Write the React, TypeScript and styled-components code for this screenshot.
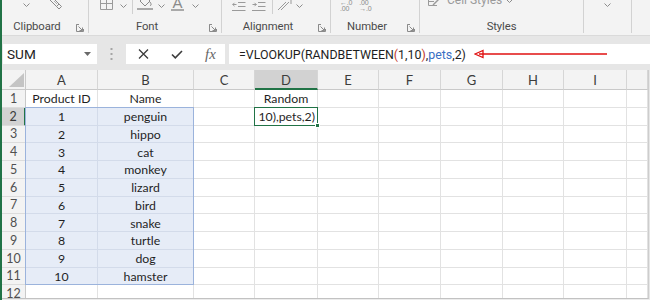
import React from "react";
import styled, { createGlobalStyle, css } from "styled-components";

const Global = createGlobalStyle`
  html, body { margin: 0; padding: 0; background: #ffffff; }
  body { width: 650px; height: 300px; overflow: hidden; font-family: Roboto, "Liberation Sans", Arial, sans-serif; }
`;

const Frame = styled.div`
  display: flex;
  width: 650px;
  height: 300px;
  overflow: hidden;
  background: #e6e6e6;
`;

const GreenEdge = styled.div`
  width: 2px;
  flex: none;
  background: #217346;
`;

const Workbook = styled.div`
  flex: 1;
  min-width: 0;
  display: flex;
  flex-direction: column;
`;

/* ---------- Ribbon ---------- */
const Ribbon = styled.div`
  height: 35px;
  flex: none;
  display: flex;
  background: #f3f3f3;
  border-bottom: 1px solid #dadada;
  overflow: hidden;
`;

const Group = styled.div<{ $w: number }>`
  width: ${(p) => p.$w}px;
  flex: none;
  height: 33px;
  display: flex;
  flex-direction: column;
  border-right: 1px solid #d2d2d2;
  box-sizing: border-box;
`;

const FillGroup = styled.div`
  flex: 1;
`;

const Tools = styled.div<{ $pl: number }>`
  height: 21px;
  flex: none;
  display: flex;
  align-items: flex-start;
  padding-left: ${(p) => p.$pl}px;
  overflow: visible;
`;

const Tool = styled.span<{ $ml?: number; $mt?: number }>`
  display: flex;
  flex: none;
  margin-left: ${(p) => p.$ml ?? 0}px;
  margin-top: ${(p) => p.$mt ?? 0}px;
`;

const ToolDivider = styled.span<{ $ml: number }>`
  width: 1px;
  height: 14px;
  flex: none;
  margin-left: ${(p) => p.$ml}px;
  background: #d0d0d0;
`;

const ColorTool = styled.span<{ $ml: number }>`
  display: flex;
  flex-direction: column;
  align-items: center;
  flex: none;
  margin-left: ${(p) => p.$ml}px;
  margin-top: -4px;
`;

const ColorBar = styled.span<{ $w: number }>`
  width: ${(p) => p.$w}px;
  height: 2px;
  background: #a9a9a9;
`;

const FontA = styled.span`
  font-family: "Liberation Sans", Arial, sans-serif;
  font-size: 15px;
  line-height: 13px;
  color: #8a8a8a;
`;

const TinyText = styled.span`
  display: flex;
  flex-direction: column;
  font-family: "Liberation Sans", Arial, sans-serif;
  font-size: 7px;
  line-height: 6px;
  color: #8a8a8a;
  letter-spacing: -0.2px;
`;

const StylesText = styled.span`
  font-family: Roboto, sans-serif;
  font-size: 12px;
  line-height: 12px;
  color: #9a9a9a;
`;

const GroupFooter = styled.div<{ $launcher?: boolean }>`
  height: 12px;
  display: flex;
  align-items: center;
  padding-right: ${(p) => (p.$launcher ? 4 : 0)}px;
`;

const GroupLabel = styled.span`
  flex: 1;
  text-align: center;
  font-size: 11.3px;
  line-height: 14px;
  color: #4a4a4a;
  letter-spacing: -0.1px;
`;

const LauncherSlot = styled.span`
  width: 12px;
  display: flex;
  justify-content: flex-end;
  margin-top: 1px;
`;

/* ---------- Formula bar ---------- */
const FormulaRow = styled.div`
  height: 34px;
  flex: none;
  display: flex;
  align-items: flex-start;
  padding: 8px 0 0 1px;
  box-sizing: border-box;
  background: #e6e6e6;
`;

const NameBox = styled.div`
  width: 94px;
  height: 20px;
  flex: none;
  display: flex;
  align-items: center;
  justify-content: space-between;
  padding: 0 6px 0 4px;
  box-sizing: border-box;
  background: #ffffff;
  font-size: 13.6px;
  color: #222222;
`;

const DotsSlot = styled.div`
  width: 29px;
  height: 20px;
  flex: none;
  display: flex;
  align-items: center;
  justify-content: center;
`;

const FxBox = styled.div`
  width: 99px;
  height: 20px;
  flex: none;
  display: flex;
  align-items: center;
  padding-left: 12px;
  box-sizing: border-box;
  background: #ffffff;
  gap: 22px;
`;

const FxLabel = styled.span`
  font-family: "Liberation Serif", "Times New Roman", serif;
  font-style: italic;
  font-size: 15px;
  color: #666666;
  line-height: 20px;
`;

const FormulaInput = styled.div`
  position: relative;
  flex: 1;
  height: 20px;
  margin-left: 4px;
  padding-left: 10px;
  display: flex;
  align-items: center;
  background: #ffffff;
  font-size: 12.4px;
  color: #1e1e1e;
  white-space: nowrap;
`;

const Paren = styled.span`
  color: #c0392b;
`;

const Ref = styled.span`
  color: #3a6fc4;
`;

const ArrowMark = styled.svg`
  position: absolute;
  left: 245px;
  top: 5px;
`;

/* ---------- Sheet ---------- */
const Sheet = styled.div`
  display: grid;
  grid-template-columns: 24px 72px 96px 61px 63px 61px 62px 62px 61px 63px 21px;
  grid-template-rows: 20px repeat(12, 17.75px);
  width: 647px;
  height: 229px;
  box-sizing: border-box;
  flex: none;
  overflow: hidden;
  background: #ffffff;
  border-right: 1px solid #cdcdcd;
  border-bottom: 1px solid #c2c2c2;
`;

const place = css<{ $r: number; $c: number }>`
  grid-row: ${(p) => p.$r};
  grid-column: ${(p) => p.$c};
`;

const Corner = styled.div<{ $r: number; $c: number }>`
  ${place};
  display: flex;
  align-items: flex-end;
  justify-content: flex-end;
  padding: 0 1px 2px 0;
  background: #f3f3f3;
  border-right: 1px solid #c9c9c9;
  border-bottom: 1px solid #c9c9c9;
`;

const ColHead = styled.div<{ $r: number; $c: number; $active?: boolean }>`
  ${place};
  display: flex;
  align-items: center;
  justify-content: center;
  font-family: Lato, sans-serif;
  font-size: 13px;
  color: #3c3c3c;
  background: ${(p) => (p.$active ? "#d2d2d2" : "#f3f3f3")};
  border-right: 1px solid #d6d6d6;
  border-bottom: ${(p) => (p.$active ? "2px solid #217346" : "1px solid #c9c9c9")};
  padding-top: ${(p) => (p.$active ? 1 : 0)}px;
`;

const RowHead = styled.div<{ $r: number; $c: number; $active?: boolean }>`
  ${place};
  display: flex;
  align-items: center;
  justify-content: center;
  font-family: Lato, sans-serif;
  font-size: 12.5px;
  color: ${(p) => (p.$active ? "#3a3a3a" : "#505050")};
  background: ${(p) => (p.$active ? "#d2d2d2" : "#f3f3f3")};
  border-right: ${(p) => (p.$active ? "2px solid #217346" : "1px solid #c9c9c9")};
  border-bottom: 1px solid #dcdcdc;
`;

const Cell = styled.div<{ $r: number; $c: number; $sel?: boolean }>`
  ${place};
  display: flex;
  align-items: center;
  justify-content: center;
  font-family: Lato, sans-serif;
  font-size: 12.3px;
  color: #1f1f1f;
  white-space: nowrap;
  overflow: hidden;
  background: ${(p) => (p.$sel ? "#e6ecf7" : "#ffffff")};
  border-right: 1px solid ${(p) => (p.$sel ? "#d3dbea" : "#e2e2e2")};
  border-bottom: 1px solid ${(p) => (p.$sel ? "#d3dbea" : "#e2e2e2")};
  padding-top: 1px;
`;

const SelectionFrame = styled.div`
  grid-row: 3 / 13;
  grid-column: 2 / 4;
  margin: -1px 0 0 -1px;
  border: 1px solid #9bb3dc;
  pointer-events: none;
`;

const ActiveCell = styled.div`
  grid-row: 3;
  grid-column: 5;
  position: relative;
  margin: -1px 0 0 -1px;
  display: flex;
  align-items: center;
  justify-content: flex-end;
  padding: 1px 2px 0 0;
  border: 1px solid #217346;
  background: #ffffff;
  font-family: Lato, sans-serif;
  font-size: 12.3px;
  color: #1f1f1f;
  white-space: nowrap;
  overflow: visible;

  &::after {
    content: "";
    position: absolute;
    right: -3px;
    bottom: -3px;
    width: 3px;
    height: 3px;
    background: #217346;
    border: 1px solid #ffffff;
  }
`;

const BottomStrip = styled.div`
  flex: 1;
  background: #ececec;
`;

/* ---------- Icons ---------- */
const Chevron = () => (
  <svg width="7" height="4" viewBox="0 0 7 4">
    <polyline points="0.5,0.5 3.5,3.5 6.5,0.5" fill="none" stroke="#8c8c8c" strokeWidth="1" />
  </svg>
);

const Launcher = () => (
  <svg width="8" height="8" viewBox="0 0 8 8">
    <path d="M0.5 3 V0.5 H3 M0.5 0.5 V7.5 H7.5 V5" fill="none" stroke="#8a8a8a" strokeWidth="1" />
    <path d="M2.5 2.5 L6.5 6.5 M6.5 3.5 V6.5 H3.5" fill="none" stroke="#8a8a8a" strokeWidth="1" />
  </svg>
);

const Brush = () => (
  <svg width="13" height="11" viewBox="0 0 13 11">
    <path d="M2 -2 L9 5 L6.5 7.5 L-0.5 0.5" fill="none" stroke="#8a8a8a" strokeWidth="1" />
    <path d="M6.5 7.5 L9 10 L11.5 7.5 L9 5" fill="none" stroke="#8a8a8a" strokeWidth="1" />
    <path d="M4 2 L7 5" stroke="#b0b0b0" strokeWidth="1" />
  </svg>
);

const BordersIcon = () => (
  <svg width="13" height="11" viewBox="0 0 13 11">
    <path d="M0.5 -2 V10.5 H12.5 V-2 M6.5 -2 V10.5 M0.5 4.5 H12.5" fill="none" stroke="#9a9a9a" strokeWidth="1" />
  </svg>
);

const Bucket = () => (
  <svg width="16" height="10" viewBox="0 0 16 10">
    <path d="M3 3 L8 -2 L13 3 L8 8 Z" fill="none" stroke="#8a8a8a" strokeWidth="1" />
    <path d="M13 4 C14.5 6 14.5 7.5 13 7.5" fill="none" stroke="#8a8a8a" strokeWidth="1" />
  </svg>
);

const IndentLess = () => (
  <svg width="14" height="9" viewBox="0 0 14 9">
    <path d="M6 0.5 H13.5 M6 4.5 H13.5 M0 8.5 H13.5" stroke="#9a9a9a" strokeWidth="1" />
    <path d="M4.5 2.5 H0.5 M2.5 0.8 L0.8 2.5 L2.5 4.2" fill="none" stroke="#9a9a9a" strokeWidth="1" />
  </svg>
);

const IndentMore = () => (
  <svg width="14" height="9" viewBox="0 0 14 9">
    <path d="M6 0.5 H13.5 M6 4.5 H13.5 M0 8.5 H13.5" stroke="#9a9a9a" strokeWidth="1" />
    <path d="M0.5 2.5 H4.5 M2.5 0.8 L4.2 2.5 L2.5 4.2" fill="none" stroke="#9a9a9a" strokeWidth="1" />
  </svg>
);

const Orientation = () => (
  <svg width="15" height="11" viewBox="0 0 15 11">
    <path d="M1 10 L9 2 M4 10 L12 2" fill="none" stroke="#9a9a9a" strokeWidth="1" />
    <path d="M9 -1 L14 -1 L14 4" fill="none" stroke="#9a9a9a" strokeWidth="1" />
  </svg>
);

const CellStylesIcon = () => (
  <svg width="13" height="7" viewBox="0 0 13 7">
    <path d="M0.5 -4 V6.5 H9 M0.5 2.5 H6" fill="none" stroke="#9a9a9a" strokeWidth="1" />
    <path d="M5 6 L12 -1" stroke="#9a9a9a" strokeWidth="1.4" />
  </svg>
);

const CloseIcon = () => (
  <svg width="11" height="10" viewBox="0 0 11 10">
    <path d="M1 0.5 L10 9.5 M10 0.5 L1 9.5" stroke="#3c3c3c" strokeWidth="1.3" />
  </svg>
);

const CheckIcon = () => (
  <svg width="12" height="9" viewBox="0 0 12 9">
    <path d="M1 4.5 L4.3 7.8 L11 1" fill="none" stroke="#3c3c3c" strokeWidth="1.6" />
  </svg>
);

const Caret = () => (
  <svg width="7" height="4" viewBox="0 0 7 4">
    <path d="M0 0 H7 L3.5 4 Z" fill="#6a6a6a" />
  </svg>
);

const Dots = () => (
  <svg width="3" height="12" viewBox="0 0 3 12">
    <rect x="0.5" y="0" width="2" height="2" fill="#a5a5a5" />
    <rect x="0.5" y="5" width="2" height="2" fill="#a5a5a5" />
    <rect x="0.5" y="10" width="2" height="2" fill="#a5a5a5" />
  </svg>
);

const SelectAll = () => (
  <svg width="15" height="14" viewBox="0 0 15 14">
    <path d="M15 0 V14 H0 Z" fill="#c4c4c4" />
  </svg>
);

/* ---------- Data ---------- */
const columns = ["A", "B", "C", "D", "E", "F", "G", "H", "I", ""];
const pets = ["penguin", "hippo", "cat", "monkey", "lizard", "bird", "snake", "turtle", "dog", "hamster"];

export default function App() {
  const cells: React.ReactNode[] = [];

  for (let r = 1; r <= 12; r++) {
    const gr = r + 1;
    for (let c = 1; c <= 10; c++) {
      const gc = c + 1;
      const sel = r >= 2 && r <= 11 && (c === 1 || c === 2);
      let text = "";
      if (r === 1) {
        if (c === 1) text = "Product ID";
        if (c === 2) text = "Name";
        if (c === 4) text = "Random";
      } else if (r <= 11) {
        if (c === 1) text = String(r - 1);
        if (c === 2) text = pets[r - 2];
      }
      if (r === 2 && c === 4) continue;
      cells.push(
        <Cell key={`${r}-${c}`} $r={gr} $c={gc} $sel={sel}>
          {text}
        </Cell>
      );
    }
  }

  return (
    <>
      <Global />
      <Frame>
        <GreenEdge />
        <Workbook>
          <Ribbon>
            <Group $w={87}>
              <Tools $pl={21}>
                <Tool $mt={3}>
                  <Chevron />
                </Tool>
                <Tool $ml={20} $mt={-1}>
                  <Brush />
                </Tool>
              </Tools>
              <GroupFooter $launcher>
                <GroupLabel>Clipboard</GroupLabel>
                <LauncherSlot>
                  <Launcher />
                </LauncherSlot>
              </GroupFooter>
            </Group>
            <Group $w={133}>
              <Tools $pl={11}>
                <Tool $mt={-1}>
                  <BordersIcon />
                </Tool>
                <Tool $ml={7} $mt={4}>
                  <Chevron />
                </Tool>
                <ToolDivider $ml={5} />
                <ColorTool $ml={4}>
                  <Tool $mt={2}>
                    <Bucket />
                  </Tool>
                  <ColorBar $w={16} />
                </ColorTool>
                <Tool $ml={5} $mt={4}>
                  <Chevron />
                </Tool>
                <ColorTool $ml={6}>
                  <FontA>A</FontA>
                  <ColorBar $w={13} />
                </ColorTool>
                <Tool $ml={8} $mt={4}>
                  <Chevron />
                </Tool>
              </Tools>
              <GroupFooter $launcher>
                <GroupLabel>Font</GroupLabel>
                <LauncherSlot>
                  <Launcher />
                </LauncherSlot>
              </GroupFooter>
            </Group>
            <Group $w={109}>
              <Tools $pl={10}>
                <Tool $mt={2}>
                  <IndentLess />
                </Tool>
                <Tool $ml={6} $mt={2}>
                  <IndentMore />
                </Tool>
                <ToolDivider $ml={6} />
                <Tool $ml={4} $mt={0}>
                  <Orientation />
                </Tool>
                <Tool $ml={4} $mt={4}>
                  <Chevron />
                </Tool>
              </Tools>
              <GroupFooter $launcher>
                <GroupLabel>Alignment</GroupLabel>
                <LauncherSlot>
                  <Launcher />
                </LauncherSlot>
              </GroupFooter>
            </Group>
            <Group $w={89}>
              <Tools $pl={9}>
                <Tool $mt={0}>
                  <TinyText>
                    <span>{"\u2190.0"}</span>
                    <span>.00</span>
                  </TinyText>
                </Tool>
                <Tool $ml={7} $mt={0}>
                  <TinyText>
                    <span>.00</span>
                    <span>{"\u2192.0"}</span>
                  </TinyText>
                </Tool>
              </Tools>
              <GroupFooter $launcher>
                <GroupLabel>Number</GroupLabel>
                <LauncherSlot>
                  <Launcher />
                </LauncherSlot>
              </GroupFooter>
            </Group>
            <Group $w={164}>
              <Tools $pl={8}>
                <Tool $mt={-1}>
                  <CellStylesIcon />
                </Tool>
                <Tool $ml={6} $mt={-6}>
                  <StylesText>Cell Styles</StylesText>
                </Tool>
                <Tool $ml={4} $mt={-1}>
                  <Chevron />
                </Tool>
              </Tools>
              <GroupFooter>
                <GroupLabel>Styles</GroupLabel>
              </GroupFooter>
            </Group>
            <Group $w={48}>
              <Tools $pl={20}>
                <Tool $mt={3}>
                  <Chevron />
                </Tool>
              </Tools>
            </Group>
            <FillGroup />
          </Ribbon>

          <FormulaRow>
            <NameBox>
              <span>SUM</span>
              <Caret />
            </NameBox>
            <DotsSlot>
              <Dots />
            </DotsSlot>
            <FxBox>
              <CloseIcon />
              <CheckIcon />
              <FxLabel>fx</FxLabel>
            </FxBox>
            <FormulaInput>
              <span>
                =VLOOKUP(RANDBETWEEN<Paren>(</Paren>1,10<Paren>)</Paren>,<Ref>pets</Ref>,2)
              </span>
              <ArrowMark width="134" height="10" viewBox="0 0 134 10">
                <polygon points="1,5 9,1.5 9,8.5" fill="#ffffff" stroke="#e01010" strokeWidth="1.3" />
                <line x1="5" y1="5" x2="133" y2="5" stroke="#e01010" strokeWidth="1.5" />
              </ArrowMark>
            </FormulaInput>
          </FormulaRow>

          <Sheet>
            <Corner $r={1} $c={1}>
              <SelectAll />
            </Corner>
            {columns.map((col, i) => (
              <ColHead key={`h${i}`} $r={1} $c={i + 2} $active={col === "D"}>
                {col}
              </ColHead>
            ))}
            {Array.from({ length: 12 }, (_, i) => (
              <RowHead key={`r${i}`} $r={i + 2} $c={1} $active={i + 1 === 2}>
                {i + 1}
              </RowHead>
            ))}
            {cells}
            <SelectionFrame />
            <ActiveCell>10),pets,2)</ActiveCell>
          </Sheet>
          <BottomStrip />
        </Workbook>
      </Frame>
    </>
  );
}
